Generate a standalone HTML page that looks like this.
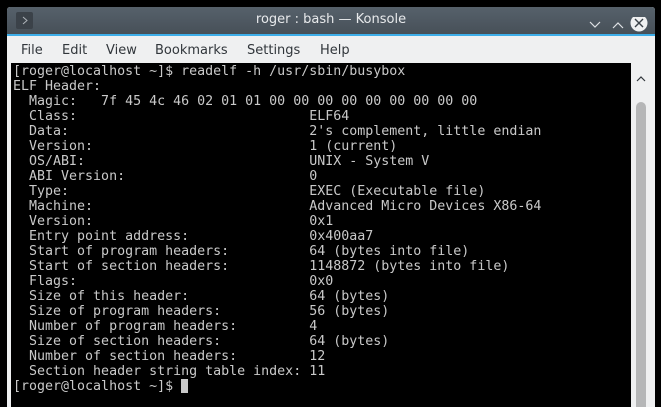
<!DOCTYPE html>
<html><head><meta charset="utf-8"><style>
html,body{margin:0;padding:0;background:#000;width:661px;height:402px;overflow:hidden;}
.win{position:absolute;left:7px;top:7px;width:648px;height:400px;background:#eff0f1;border-radius:3px 3px 0 0;overflow:hidden;}
.title{position:absolute;left:0;top:0;width:648px;height:27px;background:linear-gradient(#56616b,#475058);}
.blue{position:absolute;left:0;top:27px;width:648px;height:2px;background:#3daee9;}
.ico{position:absolute;left:9px;top:5px;width:17px;height:17px;background:#3b4249;border-radius:2px;}
.ttl{position:absolute;left:0;width:648px;top:5px;text-align:center;font:13px "DejaVu Sans","Liberation Sans",sans-serif;color:#e8eaec;}
.menu{position:absolute;top:36px;left:0;font:13px "DejaVu Sans","Liberation Sans",sans-serif;color:#31363b;}
.menu span{position:absolute;white-space:nowrap;}
.term{position:absolute;left:4px;top:56px;width:620px;height:350px;background:#000;}
pre{margin:0;position:absolute;left:2px;top:1px;font:13.3px/15px "DejaVu Sans Mono","Liberation Mono",monospace;color:#c9c9c9;}
.cur{display:inline-block;width:7px;height:14px;background:#c9c9c9;vertical-align:-3px;}
.sb{position:absolute;left:629px;top:95px;width:10px;height:310px;background:#b5b6b7;border-radius:5px 5px 0 0;}
</style></head><body>
<div class="win">
<div class="title"></div><div class="blue"></div>
<div class="ico"><svg width="17" height="17"><path d="M7 5l4 3.5-4 3.5" fill="none" stroke="#aeb4b9" stroke-width="1"/></svg></div>
<div class="ttl">roger : bash — Konsole</div>
<svg style="position:absolute;left:574px;top:10px" width="70" height="16">
<path d="M9 5l5 5 5-5" fill="none" stroke="#dfe2e5" stroke-width="1.2"/>
<path d="M32 11l5-5 5 5" fill="none" stroke="#dfe2e5" stroke-width="1.2"/>
<circle cx="58" cy="6" r="8.5" fill="#eff0f1"/>
<path d="M54 2l8 8M62 2l-8 8" stroke="#3b4249" stroke-width="1.4"/>
</svg>
<div class="menu">
<span style="left:14px">File</span><span style="left:55px">Edit</span><span style="left:99px">View</span><span style="left:148px">Bookmarks</span><span style="left:240px">Settings</span><span style="left:313px">Help</span>
</div>
<div class="term"><pre>[roger@localhost ~]$ readelf -h /usr/sbin/busybox
ELF Header:
  Magic:   7f 45 4c 46 02 01 01 00 00 00 00 00 00 00 00 00
  Class:                             ELF64
  Data:                              2's complement, little endian
  Version:                           1 (current)
  OS/ABI:                            UNIX - System V
  ABI Version:                       0
  Type:                              EXEC (Executable file)
  Machine:                           Advanced Micro Devices X86-64
  Version:                           0x1
  Entry point address:               0x400aa7
  Start of program headers:          64 (bytes into file)
  Start of section headers:          1148872 (bytes into file)
  Flags:                             0x0
  Size of this header:               64 (bytes)
  Size of program headers:           56 (bytes)
  Number of program headers:         4
  Size of section headers:           64 (bytes)
  Number of section headers:         12
  Section header string table index: 11
[roger@localhost ~]$ <span class="cur"></span></pre></div>
<svg style="position:absolute;left:628px;top:67px" width="12" height="10"><path d="M2 7l4-4 4 4" fill="none" stroke="#31363b" stroke-width="1.2"/></svg>
<div class="sb"></div>
</div>
</body></html>
